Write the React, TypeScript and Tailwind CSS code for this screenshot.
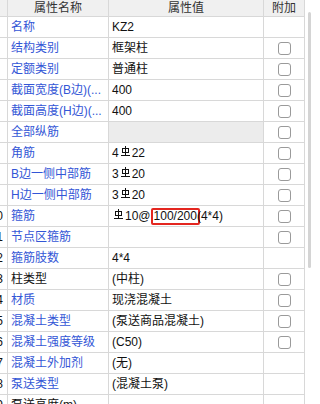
import React from 'react';

type Row = {
  no: number;
  name: string;
  value?: React.ReactNode;
  blue?: boolean;
  check?: boolean;
  grey?: boolean;
};

// steel grade III mark
const Rebar: React.FC = () => (
  <svg width="9" height="11" viewBox="0 0 9 11" className="inline-block mx-[2px] -mt-[3px] align-middle">
    <rect x="1.5" y="2.5" width="6" height="4" fill="none" stroke="#111" strokeWidth="1" />
    <line x1="4.5" y1="0" x2="4.5" y2="9.5" stroke="#111" strokeWidth="1" />
    <line x1="0" y1="9.5" x2="9" y2="9.5" stroke="#111" strokeWidth="1" />
  </svg>
);

const rows: Row[] = [
  { no: 1, name: '名称', value: 'KZ2', blue: true },
  { no: 2, name: '结构类别', value: '框架柱', blue: true, check: true },
  { no: 3, name: '定额类别', value: '普通柱', blue: true, check: true },
  { no: 4, name: '截面宽度(B边)(...', value: '400', blue: true, check: true },
  { no: 5, name: '截面高度(H边)(...', value: '400', blue: true, check: true },
  { no: 6, name: '全部纵筋', blue: true, check: true, grey: true },
  { no: 7, name: '角筋', value: <>4<Rebar />22</>, blue: true, check: true },
  { no: 8, name: 'B边一侧中部筋', value: <>3<Rebar />20</>, blue: true, check: true },
  { no: 9, name: 'H边一侧中部筋', value: <>3<Rebar />20</>, blue: true, check: true },
  {
    no: 10,
    name: '箍筋',
    value: (
      <>
        <Rebar />10@
        <span className="inline-block leading-[13px] px-[1px] border-2 border-[#e4261f] rounded-[2px] -my-[2px] -mr-[3px]">
          100/200
        </span>
        (4*4)
      </>
    ),
    blue: true,
    check: true,
  },
  { no: 11, name: '节点区箍筋', blue: true, check: true },
  { no: 12, name: '箍筋肢数', value: '4*4', blue: true },
  { no: 13, name: '柱类型', value: '(中柱)', check: true },
  { no: 14, name: '材质', value: '现浇混凝土', blue: true, check: true },
  { no: 15, name: '混凝土类型', value: '(泵送商品混凝土)', blue: true, check: true },
  { no: 16, name: '混凝土强度等级', value: '(C50)', blue: true, check: true },
  { no: 17, name: '混凝土外加剂', value: '(无)', blue: true },
  { no: 18, name: '泵送类型', value: '(混凝土泵)', blue: true },
  { no: 19, name: '泵送高度(m)', value: '' },
];

export default function App() {
  return (
    <div
      className="w-[311px] h-[404px] overflow-hidden bg-white flex text-[12px] text-[#111]"
      style={{ fontFamily: '"Liberation Sans", "Noto Sans CJK SC", sans-serif' }}
    >
      <div className="w-[305px] shrink-0 grid grid-cols-[8px_101px_155px_41px] auto-rows-[21px] grid-rows-[17px]">
        <div className="bg-[#f0f0f0] border-r border-b border-[#d8d8d8]" />
        <div className="bg-[#f0f0f0] border-r border-b border-[#d8d8d8] flex items-center justify-center text-[#333] leading-none">
          属性名称
        </div>
        <div className="bg-[#f0f0f0] border-r border-b border-[#d8d8d8] flex items-center justify-center text-[#333] leading-none">
          属性值
        </div>
        <div className="bg-[#f0f0f0] border-r border-b border-[#d8d8d8] flex items-center justify-center text-[#333] leading-none">
          附加
        </div>

        {rows.map((r) => (
          <React.Fragment key={r.no}>
            <div className="border-r border-b border-[#d8d8d8] flex items-center justify-end overflow-hidden pr-[4px] whitespace-nowrap">
              {r.no >= 10 ? r.no : ''}
            </div>
            <div
              className={`border-r border-b border-[#d8d8d8] flex items-center pl-[3px] whitespace-nowrap overflow-hidden ${
                r.blue ? 'text-[#3356d6]' : 'text-[#111]'
              }`}
            >
              {r.name}
            </div>
            <div
              className={`border-r border-b border-[#d8d8d8] flex items-center pl-[3px] whitespace-nowrap overflow-hidden ${
                r.grey ? 'bg-[#ececec]' : ''
              }`}
            >
              {r.value}
            </div>
            <div className="border-r border-b border-[#d8d8d8] flex items-center justify-center">
              {r.check && <div className="w-[13px] h-[13px] rounded-[3px] border border-[#9a9a9a] bg-white" />}
            </div>
          </React.Fragment>
        ))}
      </div>
      <div className="flex-1 flex justify-end pt-[12px]">
        <div className="w-[3px] h-[256px] rounded-full bg-[#d4d4d4]" />
      </div>
    </div>
  );
}
